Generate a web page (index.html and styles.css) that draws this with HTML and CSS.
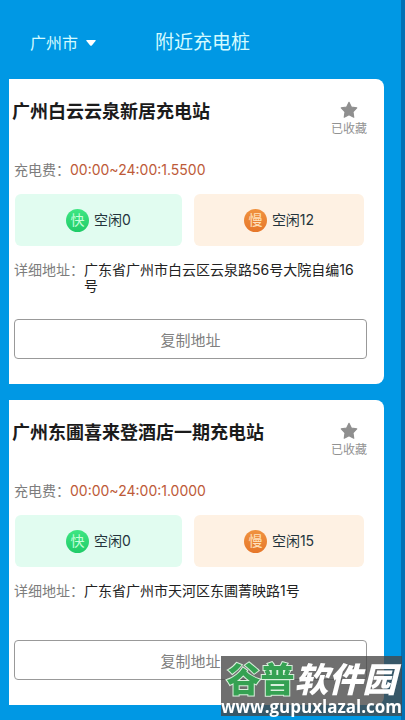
FILE: index.html
```html
<!DOCTYPE html>
<html lang="zh-CN">
<head>
<meta charset="utf-8">
<meta name="viewport" content="width=device-width, initial-scale=1">
<title>附近充电桩</title>
<link rel="stylesheet" href="styles.css">
</head>
<body>
<header class="topbar">
  <button class="city" type="button">广州市
    <svg class="caret" viewBox="0 0 10 6" aria-hidden="true"><path d="M1 0h8q1.400 0 .5 1L5.800 5.400q-.8.800-1.600 0L.5 1Q-.4 0 1 0z"/></svg>
  </button>
  <h1 class="heading">附近充电桩</h1>
</header>
<main class="stations">
  <article class="card">
    <div class="card-head">
      <h2 class="name">广州白云云泉新居充电站</h2>
      <button class="favorite" type="button">
        <svg class="star" viewBox="0 0 18 18" aria-hidden="true"><path d="M9 2l2.100 4.300 4.900.8-3.400 3.500.7 4.900L9 13.200l-4.300 2.300.7-4.900L2 7.100l4.900-.8z"/></svg>
        <span>已收藏</span>
      </button>
    </div>
    <p class="fee"><span class="label">充电费：</span><span class="price">00:00~24:00:1.5500</span></p>
    <div class="slots">
      <div class="slot fast"><span class="badge">快</span><span>空闲0</span></div>
      <div class="slot slow"><span class="badge">慢</span><span>空闲12</span></div>
    </div>
    <div class="address"><span class="label">详细地址：</span><span class="place">广东省广州市白云区云泉路56号大院自编16号</span></div>
    <button class="copy" type="button">复制地址</button>
  </article>
  <article class="card">
    <div class="card-head">
      <h2 class="name">广州东圃喜来登酒店一期充电站</h2>
      <button class="favorite" type="button">
        <svg class="star" viewBox="0 0 18 18" aria-hidden="true"><path d="M9 2l2.100 4.300 4.900.8-3.400 3.500.7 4.900L9 13.200l-4.300 2.300.7-4.900L2 7.100l4.900-.8z"/></svg>
        <span>已收藏</span>
      </button>
    </div>
    <p class="fee"><span class="label">充电费：</span><span class="price">00:00~24:00:1.0000</span></p>
    <div class="slots">
      <div class="slot fast"><span class="badge">快</span><span>空闲0</span></div>
      <div class="slot slow"><span class="badge">慢</span><span>空闲15</span></div>
    </div>
    <div class="address"><span class="label">详细地址：</span><span class="place">广东省广州市天河区东圃菁映路1号</span></div>
    <button class="copy" type="button">复制地址</button>
  </article>
</main>
<aside class="watermark">
  <div class="brand"><span class="brand-green">谷普</span><span class="brand-white">软件园</span></div>
  <div class="site">www.gupuxlazal.com</div>
</aside>
</body>
</html>
```
FILE: styles.css
```css
* {
  box-sizing: border-box;
}

body {
  margin: 0;
  min-height: 100vh;
  background: #0098e4;
  border-right: 4px solid #0071b5;
  font-family: Inter, "Noto Sans CJK SC", sans-serif;
  font-size: 14px;
  line-height: 16px;
  color: #222;
}

h1, h2, p {
  margin: 0;
  font-weight: 400;
}

button {
  padding: 0;
  border: 0;
  background: none;
  font-family: inherit;
}

.topbar {
  display: grid;
  grid-template-columns: 1fr auto 1fr;
  align-items: center;
  padding: 29px 0 22px 4px;
  color: #d4fbff;
}

.city {
  display: flex;
  align-items: center;
  gap: 8px;
  padding-left: 26px;
  font-size: 16px;
  line-height: 28px;
  color: inherit;
}

.caret {
  width: 10px;
  height: 6px;
  fill: #fff;
}

.heading {
  font-size: 19px;
  line-height: 28px;
}

.stations {
  display: grid;
  gap: 16px;
  padding: 0 17px 15px 9px;
}

.card {
  padding: 16px 17px 25px 5px;
  border-radius: 0 8px 8px 0;
  background: #fff;
}

.card-head {
  display: flex;
  justify-content: space-between;
  align-items: flex-start;
}

.name {
  margin-left: -2px;
  padding-top: 5px;
  font-size: 18px;
  line-height: 24px;
  font-weight: 700;
  color: #1b1b1b;
}

.favorite {
  display: grid;
  justify-items: center;
  gap: 1px;
  padding-top: 5px;
  font-size: 12px;
  line-height: 16px;
  color: #929292;
}

.star {
  width: 20px;
  height: 20px;
  fill: #8f8f8f;
  stroke: #8f8f8f;
  stroke-width: 1;
  stroke-linejoin: round;
}

.fee {
  display: flex;
  padding: 25px 0 16px;
}

.label {
  flex: none;
  color: #7d7d7d;
}

.price {
  color: #bd5a38;
}

.slots {
  display: grid;
  grid-template-columns: 167fr 170fr;
  gap: 12px;
  padding: 0 3px 0 1px;
}

.slot {
  display: flex;
  align-items: center;
  justify-content: center;
  gap: 5px;
  height: 52px;
  border-radius: 6px;
  color: #24343c;
}

.fast {
  background: #e1fcf0;
}

.slow {
  background: #fef1e3;
}

.badge {
  width: 23px;
  height: 23px;
  border-radius: 50%;
  line-height: 22px;
  text-align: center;
  color: #c4ffd9;
}

.fast .badge {
  background: linear-gradient(#3fe683, #1fcb68);
}

.slow .badge {
  background: linear-gradient(#f0923f, #e6772a);
  color: #ffe2bd;
}

.address {
  display: flex;
  min-height: 73px;
  padding-top: 16px;
}

.copy {
  display: block;
  width: 100%;
  height: 40px;
  border: 1px solid #999;
  border-radius: 4px;
  font-size: 15px;
  color: #808080;
}

.watermark {
  position: fixed;
  right: 3px;
  bottom: 4px;
  padding-top: 6px;
  width: 181px;
  height: 60px;
  background: rgba(70, 70, 70, 0.78);
  color: #fff;
  font-weight: 900;
  text-align: center;
  white-space: nowrap;
}

.brand {
  display: flex;
  align-items: center;
  justify-content: center;
  height: 36px;
  font-size: 34px;
  line-height: 34px;
}

.brand-white {
  font-style: italic;
}

.brand-green {
  color: #35a152;
  paint-order: stroke fill;
  -webkit-text-stroke: 2px #d8f0dc;
}

.site {
  font-family: "Open Sans", sans-serif;
  font-size: 17px;
  line-height: 18px;
  font-weight: 700;
}
```
